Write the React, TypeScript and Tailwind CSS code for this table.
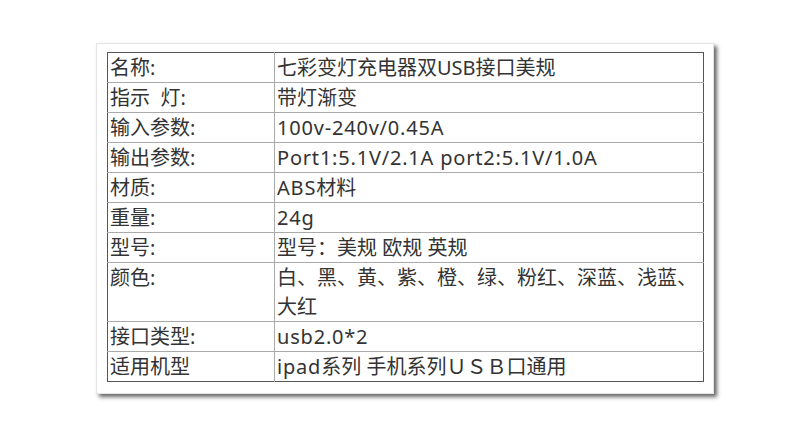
import React from "react";

const L = ({ children }: { children: React.ReactNode }) => (
  <span className="tracking-[0.8px]">{children}</span>
);

const rows: { label: string; value: React.ReactNode }[] = [
  { label: "名称:", value: "七彩变灯充电器双USB接口美规" },
  { label: "指示\u00a0\u00a0灯:", value: "带灯渐变" },
  { label: "输入参数:", value: <L>100v-240v/0.45A</L> },
  { label: "输出参数:", value: <L>Port1:5.1V/2.1A port2:5.1V/1.0A</L> },
  { label: "材质:", value: <><L>ABS</L>材料</> },
  { label: "重量:", value: <L>24g</L> },
  { label: "型号:", value: "型号：美规 欧规 英规" },
  {
    label: "颜色:",
    value: (
      <>
        白、黑、黄、紫、橙、绿、粉红、深蓝、浅蓝、
        <br />
        大红
      </>
    ),
  },
  { label: "接口类型:", value: <L>usb2.0*2</L> },
  { label: "适用机型", value: <><L>ipad</L>系列 手机系列ＵＳＢ口通用</> },
];

export default function App() {
  return (
    <div
      className="w-[800px] h-[433px] bg-white pt-[43px] pl-[96px] text-[#333]"
      style={{ fontFamily: '"Noto Sans", "Noto Sans CJK SC", sans-serif' }}
    >
      <div className="w-[618px] h-[351px] bg-white border border-[#e4e4e4] shadow-[3px_3px_4px_rgba(0,0,0,0.6)] pt-[8px] pl-[10px]">
        <table className="border-collapse border border-[#555] w-[597px] table-fixed">
          <colgroup>
            <col className="w-[167px]" />
            <col />
          </colgroup>
          <tbody>
            {rows.map((r, i) => (
              <tr key={i} className="border-b border-[#aaa] last:border-b-[#555]">
                <td className="border-r border-[#aaa] align-top pl-[2px] text-[20px] leading-[29px] whitespace-nowrap">
                  {r.label}
                </td>
                <td className="align-top pl-[2px] text-[20px] leading-[29px] whitespace-nowrap">
                  {r.value}
                </td>
              </tr>
            ))}
          </tbody>
        </table>
      </div>
    </div>
  );
}
